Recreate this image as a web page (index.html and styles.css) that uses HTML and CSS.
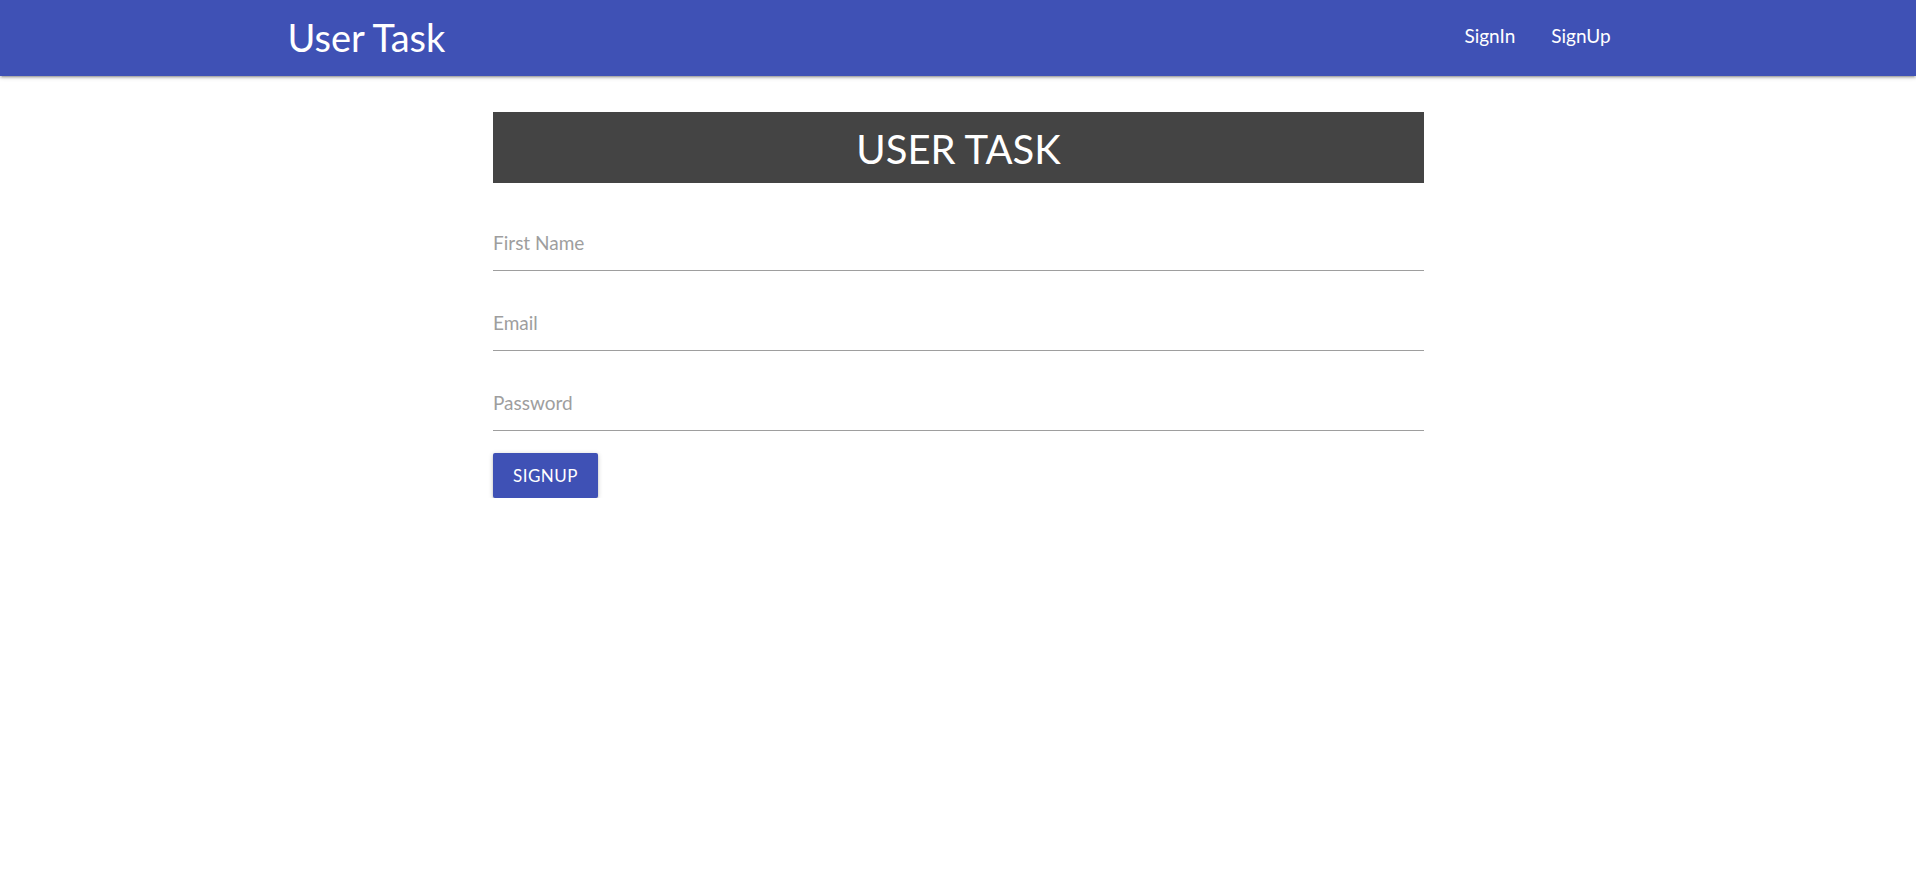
FILE: index.html
```html
<!DOCTYPE html>
<html lang="en">
<head>
<meta charset="utf-8">
<title>User Task</title>
<link rel="stylesheet" href="styles.css">
</head>
<body>
<nav class="navbar">
  <div class="nav-inner">
    <a class="brand" href="#">User Task</a>
    <ul class="nav-links">
      <li><a href="#">SignIn</a></li>
      <li><a href="#">SignUp</a></li>
    </ul>
  </div>
</nav>
<main class="main">
  <h3 class="banner">USER TASK</h3>
  <form class="form">
    <div class="field"><input type="text" placeholder="First Name"></div>
    <div class="field"><input type="email" placeholder="Email"></div>
    <div class="field"><input type="password" placeholder="Password"></div>
    <button type="button" class="btn">SIGNUP</button>
  </form>
</main>
</body>
</html>
```
FILE: styles.css
```css
* { box-sizing: border-box; }
html, body { margin: 0; padding: 0; background: #fff; }
body { font-family: "Lato", "Segoe UI", "Noto Sans", sans-serif; color: rgba(0,0,0,0.87); }

.navbar {
  height: 76px;
  background: #3f51b5;
  box-shadow: 0 2px 2px 0 rgba(0,0,0,0.14), 0 3px 1px -2px rgba(0,0,0,0.12), 0 1px 5px 0 rgba(0,0,0,0.2);
}
.nav-inner {
  width: 70%;
  height: 100%;
  margin: 0 auto;
  display: flex;
  align-items: center;
  justify-content: space-between;
}
.brand {
  color: #fff;
  text-decoration: none;
  font-size: 38px;
  line-height: 76px;
  margin-top: -2px;
}
.nav-links {
  list-style: none;
  margin: 0;
  padding: 0;
  display: flex;
  height: 100%;
}
.nav-links a {
  display: block;
  color: #fff;
  text-decoration: none;
  font-size: 19px;
  line-height: 76px;
  padding: 0 18px;
  margin-top: -2px;
}

.main {
  width: 932px;
  margin: 36px auto 0;
  padding-left: 1px;
}
.banner {
  margin: 0;
  height: 71px;
  background: #444;
  color: #fff;
  font-weight: 400;
  font-size: 40px;
  line-height: 74px;
  text-align: center;
}
.form { display: flex; flex-direction: column; align-items: flex-start; padding-top: 28px; }
.field { width: 100%; margin-bottom: 20px; }
.field:last-of-type { margin-bottom: 22px; }
.field input {
  width: 100%;
  height: 60px;
  padding: 3px 0 0;
  border: none;
  border-bottom: 1px solid #9e9e9e;
  outline: none;
  font-family: inherit;
  font-size: 19px;
  background: transparent;
}
.field input::placeholder { color: #9e9e9e; }
.btn {
  width: 105px;
  height: 45px;
  border: none;
  border-radius: 2px;
  background: #3f51b5;
  color: #fff;
  font-family: inherit;
  font-size: 17px;
  letter-spacing: 0.5px;
  padding: 0;
  box-shadow: 0 2px 2px 0 rgba(0,0,0,0.14), 0 3px 1px -2px rgba(0,0,0,0.12), 0 1px 5px 0 rgba(0,0,0,0.2);
}
```
